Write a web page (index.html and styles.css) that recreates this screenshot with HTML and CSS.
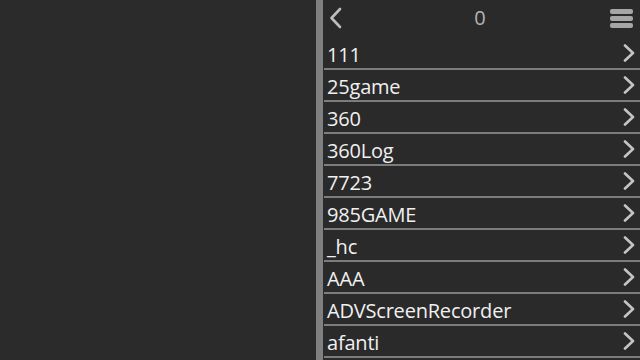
FILE: index.html
```html
<!DOCTYPE html>
<html lang="en">
<head>
  <meta charset="utf-8">
  <link rel="stylesheet" href="styles.css">
</head>
<body>
  <div class="screen">
    <div class="blank"></div>
    <div class="divider"></div>
    <div class="panel">
      <div class="header">
        <svg class="back" width="14" height="22" viewBox="0 0 14 22"><path d="M12 2 L3.5 11 L12 20" fill="none" stroke="#bdbdbd" stroke-width="2.6" stroke-linecap="round" stroke-linejoin="round"/></svg>
        <span class="count">0</span>
        <div class="menu">
          <span></span><span></span><span></span>
        </div>
      </div>
      <ul class="list">
        <li><span>111</span><svg class="arrow" viewBox="0 0 12 18"><path d="M2 1.5 L10 9 L2 16.5" /></svg></li>
        <li><span>25game</span><svg class="arrow" viewBox="0 0 12 18"><path d="M2 1.5 L10 9 L2 16.5" /></svg></li>
        <li><span>360</span><svg class="arrow" viewBox="0 0 12 18"><path d="M2 1.5 L10 9 L2 16.5" /></svg></li>
        <li><span>360Log</span><svg class="arrow" viewBox="0 0 12 18"><path d="M2 1.5 L10 9 L2 16.5" /></svg></li>
        <li><span>7723</span><svg class="arrow" viewBox="0 0 12 18"><path d="M2 1.5 L10 9 L2 16.5" /></svg></li>
        <li><span>985GAME</span><svg class="arrow" viewBox="0 0 12 18"><path d="M2 1.5 L10 9 L2 16.5" /></svg></li>
        <li><span>_hc</span><svg class="arrow" viewBox="0 0 12 18"><path d="M2 1.5 L10 9 L2 16.5" /></svg></li>
        <li><span>AAA</span><svg class="arrow" viewBox="0 0 12 18"><path d="M2 1.5 L10 9 L2 16.5" /></svg></li>
        <li><span>ADVScreenRecorder</span><svg class="arrow" viewBox="0 0 12 18"><path d="M2 1.5 L10 9 L2 16.5" /></svg></li>
        <li><span>afanti</span><svg class="arrow" viewBox="0 0 12 18"><path d="M2 1.5 L10 9 L2 16.5" /></svg></li>
      </ul>
    </div>
  </div>
</body>
</html>
```
FILE: styles.css
```css
html, body {
  margin: 0;
  padding: 0;
  background-color: #2b2b2b;
}
body {
  font-family: "Open Sans", "DejaVu Sans", sans-serif;
  overflow: hidden;
}
.screen {
  display: flex;
  width: 640px;
  height: 360px;
}
.blank {
  width: 316px;
  background-color: #2b2b2b;
}
.divider {
  width: 7px;
  background-color: #808080;
}
.panel {
  flex: 1;
  background-color: #2a2a2a;
  padding-left: 1px;
}
.header {
  height: 38px;
  display: flex;
  align-items: center;
  justify-content: space-between;
  padding: 0 7px 0 4px;
}
.back {
  margin-top: -2px;
}
.count {
  color: #b4b4b4;
  font-size: 20px;
  margin-top: -4px;
  margin-left: 8px;
}
.menu {
  display: flex;
  flex-direction: column;
  gap: 2px;
  margin-top: -2px;
}
.menu span {
  display: block;
  width: 23px;
  height: 5px;
  border-radius: 2px;
  background-color: #a6a6a6;
}
.list {
  list-style: none;
  margin: 0;
  padding: 0;
}
.list li {
  height: 30px;
  display: flex;
  align-items: center;
  justify-content: space-between;
  border-bottom: 2px solid #7c7c7c;
  padding: 0 5px 0 3px;
  color: #f0f0f0;
  font-size: 20px;
  letter-spacing: -0.2px;
}
.list li span {
  margin-top: 2px;
}
.arrow {
  width: 12px;
  height: 18px;
  margin-top: 0;
}
.arrow path {
  fill: none;
  stroke: #c4c4c4;
  stroke-width: 2.6;
  stroke-linecap: round;
  stroke-linejoin: round;
}
```
